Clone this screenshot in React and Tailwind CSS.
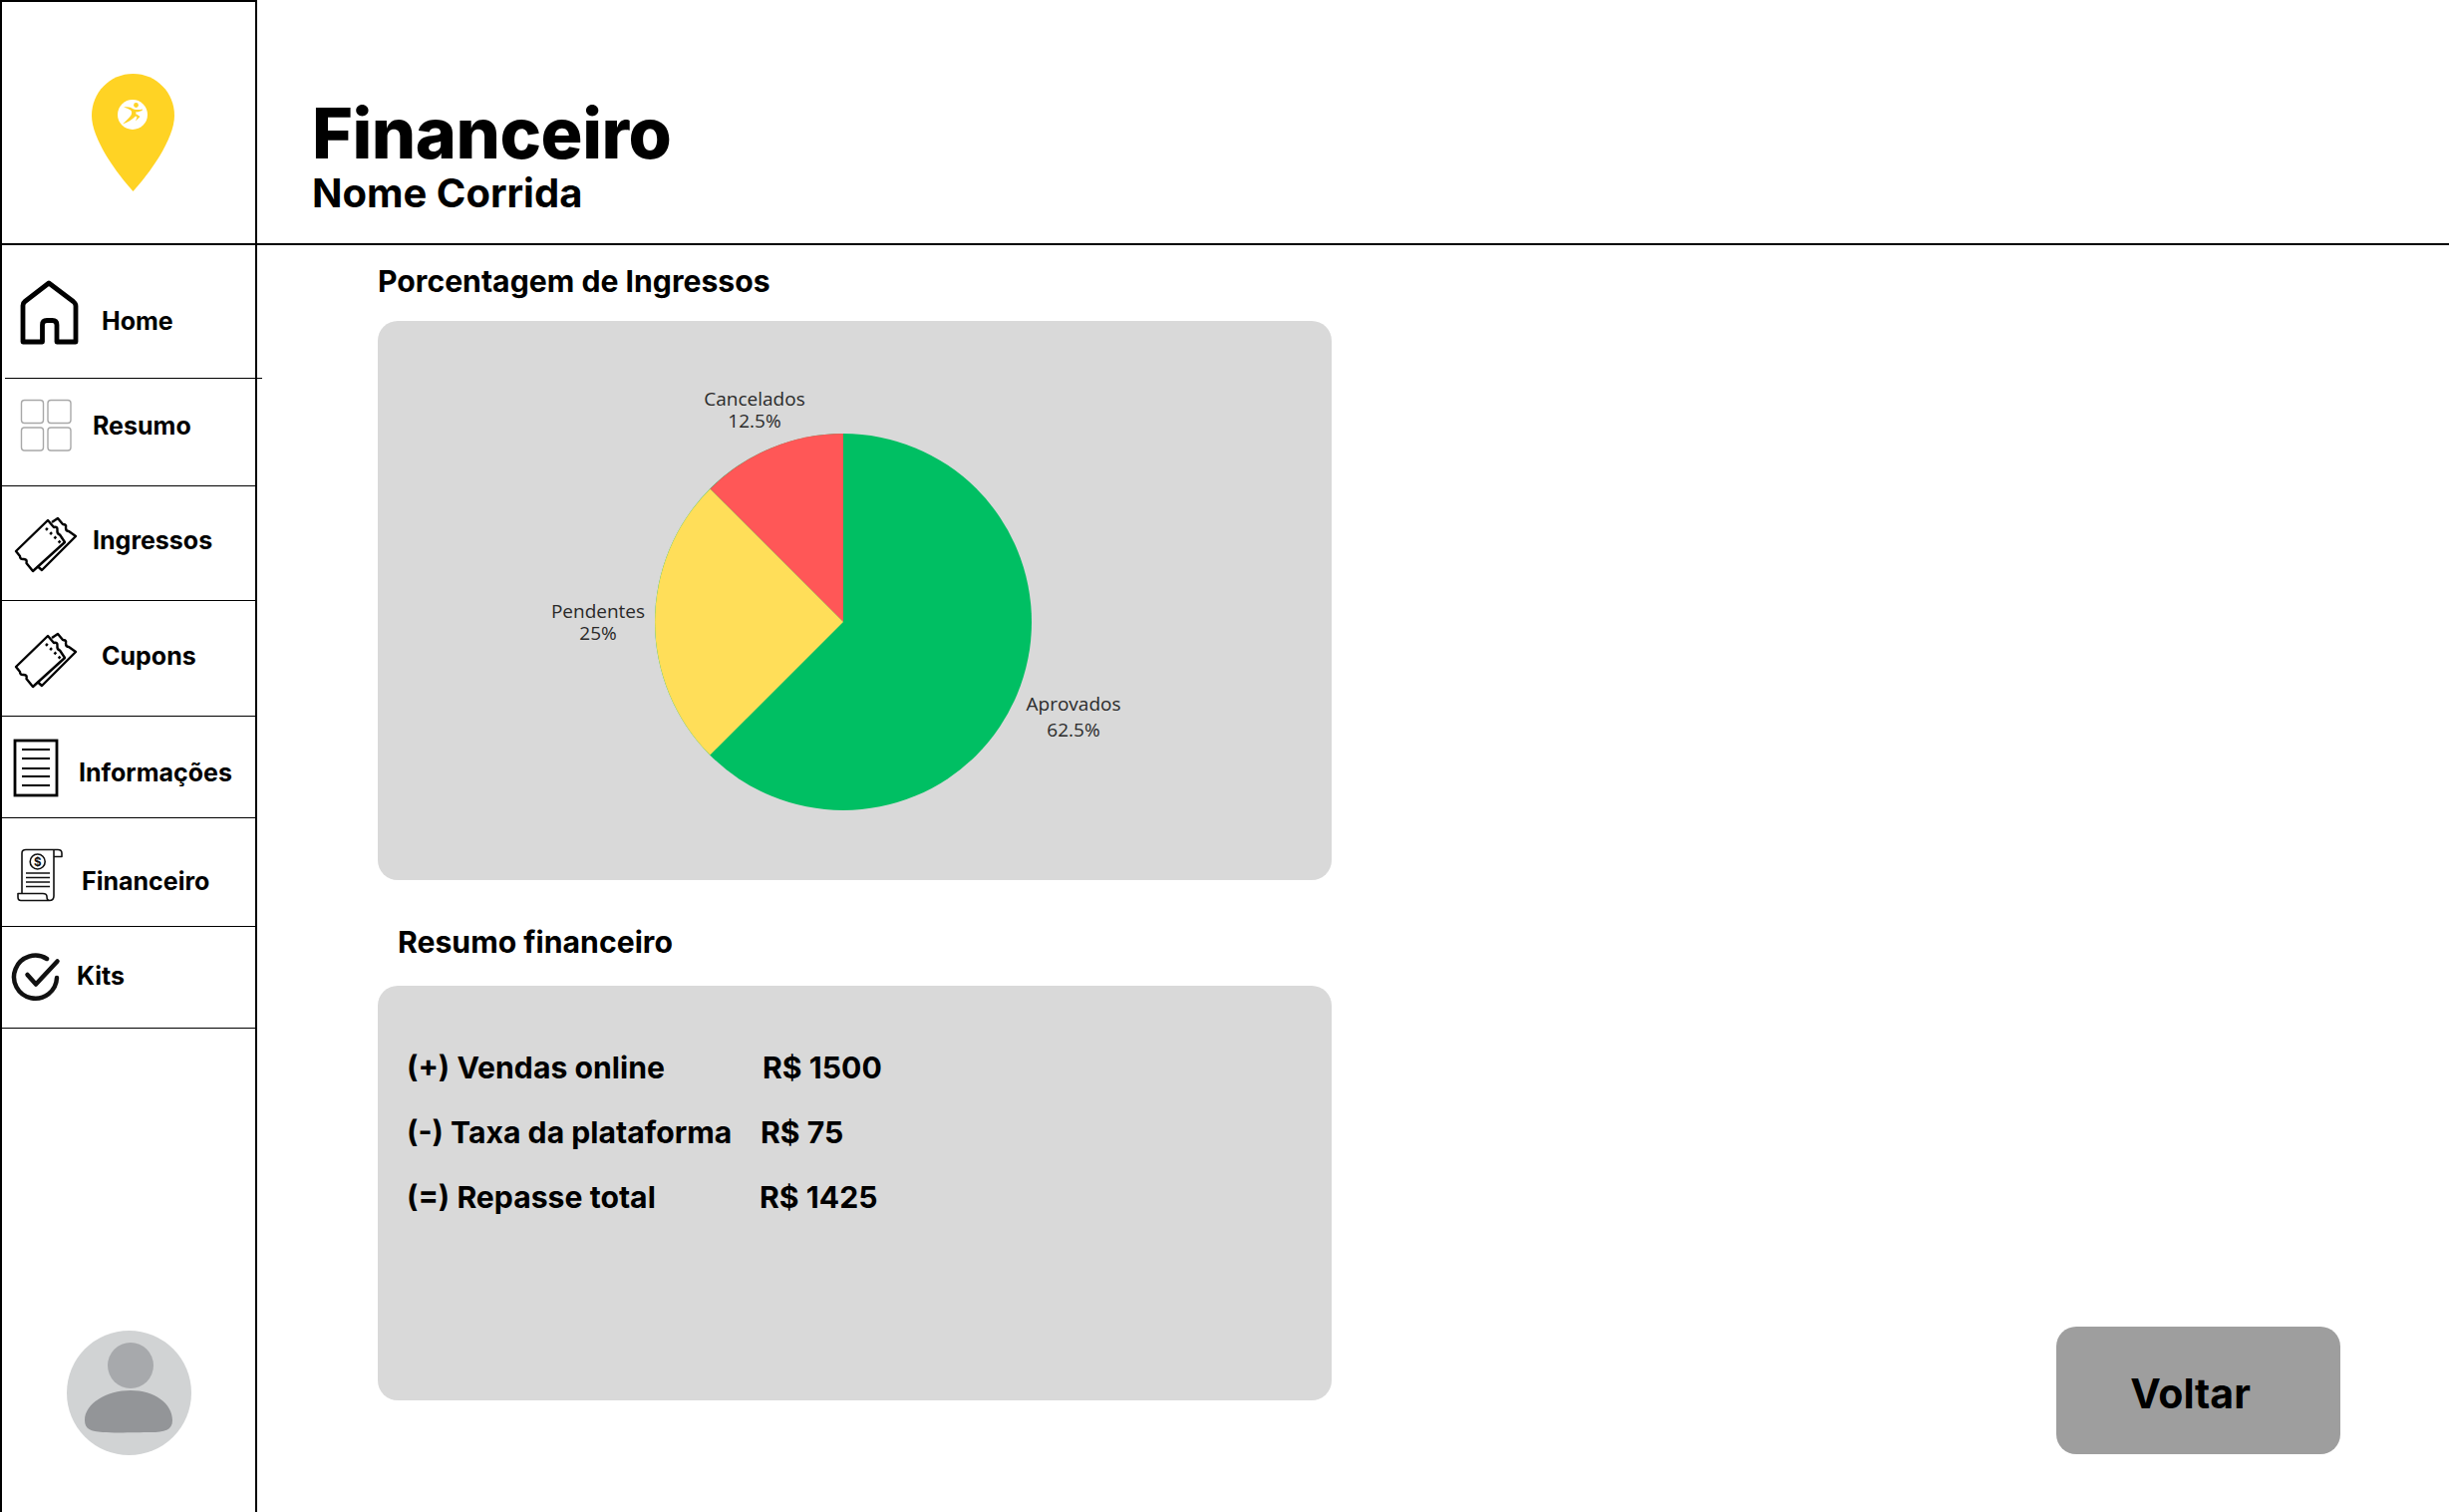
const HomeIcon = () => (
  <svg width="60" height="68" viewBox="0 0 60 68" fill="none" stroke="#000" strokeWidth="4.8" strokeLinejoin="round">
    <path d="M22.5 63H3V26.5Q3 24 5 22.5L29 4L53.5 22.5Q56 24.5 56 27V63H37V46Q37 41.5 32.5 41.5H27Q22.5 41.5 22.5 46Z" />
  </svg>
);

const GridIcon = () => (
  <svg width="52" height="54" viewBox="0 0 52 54" fill="none" stroke="#a8a8a8" strokeWidth="1.4">
    <rect x="1.5" y="1.5" width="22" height="23" rx="3" />
    <rect x="28" y="1.5" width="23" height="23" rx="3" />
    <rect x="1.5" y="29" width="22" height="23" rx="3" />
    <rect x="28" y="29" width="23" height="23" rx="3" />
  </svg>
);

const TicketIcon = () => (
  <svg width="64" height="57" viewBox="0 0 64 57" fill="none" stroke="#000" strokeWidth="2.4" strokeLinejoin="round">
    <path d="M34 4L40 11Q44 10 43.5 14Q43 18 46 18.5L51 26L19 55L12.5 47Q13.5 43 10 43Q6 43.5 6 40L2 35Z" />
    <path d="M38 6L44 2L49 8Q53 8 52 11.5Q52 15 55 15L62 20L28 54L23.5 50" />
    <path d="M32 12L47 27" strokeWidth="2.6" strokeDasharray="2.5 3.5" />
  </svg>
);

const DocIcon = () => (
  <svg width="48" height="60" viewBox="0 0 48 60" fill="none" stroke="#000" strokeWidth="2.2">
    <rect x="3" y="3" width="42" height="55" strokeWidth="2.8" />
    <path d="M10 12H38M10 21H38M10 31H38M10 39H38M10 48H38" />
  </svg>
);

const ScrollIcon = () => (
  <svg width="46" height="54" viewBox="0 0 46 54" fill="none" stroke="#111" strokeWidth="1.6" strokeLinejoin="round">
    <path d="M5 45V5Q5 1.5 9 1.5H41Q45 1.5 45 5V8.5H37" />
    <path d="M37 1.5Q37 4 37 8.5V48Q37 52.5 32.5 52.5H4Q1 52.5 1 49V45.5H26Q30 45.5 30 48.5Q30 52.5 33 52.5" />
    <circle cx="20.7" cy="13.5" r="7.5" />
    <text x="20.7" y="17.6" textAnchor="middle" fontFamily="Inter, sans-serif" fontWeight="700" fontSize="11.5" fill="#111" stroke="none">$</text>
    <path d="M9 25H33M9 29.5H33M9 34H33M9 38.5H33" />
  </svg>
);

const CheckIcon = () => (
  <svg width="52" height="52" viewBox="0 0 52 52" fill="none" stroke="#111" strokeWidth="4.5" strokeLinecap="round" strokeLinejoin="round">
    <path d="M37 9A21.5 21.5 0 1 0 47 28" />
    <path d="M17.5 25L26 34.5L47.5 11.5" />
  </svg>
);

const navItems = [
  { label: "Home", icon: <HomeIcon />, row: "h-[134px] -mr-[7px] ml-[3px]", iconBox: "mt-[34px] ml-[15px]", text: "mt-[61px] ml-[22px]" },
  { label: "Resumo", icon: <GridIcon />, row: "h-[108px]", iconBox: "mt-[20px] ml-[18px]", text: "mt-[32px] ml-[21px]" },
  { label: "Ingressos", icon: <TicketIcon />, row: "h-[115px]", iconBox: "mt-[30px] ml-[12px]", text: "mt-[39px] ml-[15px]" },
  { label: "Cupons", icon: <TicketIcon />, row: "h-[116px]", iconBox: "mt-[31px] ml-[12px]", text: "mt-[40px] ml-[24px]" },
  { label: "Informações", icon: <DocIcon />, row: "h-[102px]", iconBox: "mt-[21px] ml-[10px]", text: "mt-[41px] ml-[19px]" },
  { label: "Financeiro", icon: <ScrollIcon />, row: "h-[109px]", iconBox: "mt-[30px] ml-[15px]", text: "mt-[48px] ml-[19px]" },
  { label: "Kits", icon: <CheckIcon />, row: "h-[102px]", iconBox: "mt-[23px] ml-[8px]", text: "mt-[34px] ml-[15px]" },
];

const summary = [
  { label: "(+) Vendas online", value: "R$ 1500", valueClass: "ml-[2px]" },
  { label: "(-) Taxa da plataforma", value: "R$ 75", valueClass: "" },
  { label: "(=) Repasse total", value: "R$ 1425", valueClass: "-ml-[1px]" },
];

const Logo = () => (
  <svg width="83" height="118" viewBox="0 0 83 118">
    <path d="M41.5 0C18 0 0 19 0 42C0 66 26 101 41.5 118C57 101 83 66 83 42C83 19 65 0 41.5 0Z" fill="#ffd324" />
    <circle cx="41" cy="41" r="15" fill="#fff" />
    <circle cx="44.5" cy="31.5" r="2.4" fill="#ffd324" />
    <path d="M32 33.5Q38 32.5 42 35.5Q46 36.5 51 35.5L50.5 37Q46 38.5 44 38.5Q45.5 41 43.5 43Q39 47.5 31 50.5Q37 45 39.5 41.5Q41 38 39 36.5Q36 34.5 32 33.5Z" fill="#ffd324" />
    <path d="M45 40.5L48.5 43L44 47.5L45.5 43.5L43.5 42Z" fill="#ffd324" />
  </svg>
);

const Avatar = () => (
  <svg width="125" height="125" viewBox="0 0 125 125">
    <circle cx="62.5" cy="62.5" r="62.5" fill="#d1d3d4" />
    <circle cx="64" cy="35" r="23" fill="#a7a9ac" />
    <path d="M18 90C18 73 40 60 64 60C88 60 106 73 106 90C106 100 98 102 84 102C72 102 50 103 36 102C24 101 18 99 18 90Z" fill="#939598" />
  </svg>
);

const PieChart = () => (
  <svg className="w-full" width="957" height="560" viewBox="0 0 957 560" fontFamily="'Open Sans', sans-serif" fontSize="19" fill="#2a2a2a">
    <circle cx="467" cy="302" r="189" fill="#00bf63" />
    <path d="M467 302V113A189 189 0 0 0 333.4 168.4Z" fill="#ff5757" />
    <path d="M467 302L333.4 168.4A189 189 0 0 0 333.4 435.6Z" fill="#ffde59" />
    <text textAnchor="middle">
      <tspan x="378" y="85">Cancelados</tspan>
      <tspan x="378" y="107">12.5%</tspan>
    </text>
    <text textAnchor="middle">
      <tspan x="221" y="298">Pendentes</tspan>
      <tspan x="221" y="320">25%</tspan>
    </text>
    <text textAnchor="middle">
      <tspan x="698" y="391">Aprovados</tspan>
      <tspan x="698" y="417">62.5%</tspan>
    </text>
  </svg>
);

export default function App() {
  return (
    <div className="flex h-[1517px] w-[2457px] overflow-hidden bg-white text-black font-['Inter',sans-serif]">
      <aside className="flex w-[258px] shrink-0 flex-col border-x-2 border-black">
        <div className="flex h-[246px] shrink-0 items-start border-y-2 border-black pl-[90px] pt-[72px]">
          <Logo />
        </div>
        {navItems.map((item) => (
          <div key={item.label} className={`flex shrink-0 border-b border-black ${item.row}`}>
            <div className={`shrink-0 ${item.iconBox}`}>{item.icon}</div>
            <span className={`text-[25px] leading-[30px] font-bold whitespace-nowrap ${item.text}`}>{item.label}</span>
          </div>
        ))}
        <div className="mt-[303px] ml-[65px]">
          <Avatar />
        </div>
      </aside>

      <main className="flex min-w-0 flex-1 flex-col">
        <header className="h-[246px] shrink-0 border-b-2 border-black pl-[55px] pt-[99px]">
          <h1 className="text-[70px] leading-[70px] font-extrabold tracking-[-0.5px]">Financeiro</h1>
          <p className="mt-[3px] text-[40px] leading-[44px] font-bold">Nome Corrida</p>
        </header>

        <div className="flex flex-1 items-end justify-between pb-[58px] pl-[121px] pr-[109px]">
          <div className="flex w-[957px] flex-col self-start">
            <h2 className="mt-[18px] text-[30.2px] leading-[36px] font-bold">Porcentagem de Ingressos</h2>
            <section className="mt-[22px] h-[561px] rounded-[20px] bg-[#d9d9d9]">
              <PieChart />
            </section>
            <h2 className="mt-[44px] ml-[20px] text-[30.2px] leading-[36px] font-bold">Resumo financeiro</h2>
            <section className="mt-[26px] flex h-[416px] flex-col gap-[29px] rounded-[20px] bg-[#d9d9d9] pl-[29px] pt-[64px]">
              {summary.map((row) => (
                <div key={row.label} className="flex text-[30.2px] leading-[36px] font-bold">
                  <span className="w-[355px] whitespace-nowrap">{row.label}</span>
                  <span className={row.valueClass}>{row.value}</span>
                </div>
              ))}
            </section>
          </div>
          <button className="h-[128px] w-[285px] rounded-[20px] bg-[#9e9e9e] pt-[8px] pr-[16px] text-[41px] font-bold">
            Voltar
          </button>
        </div>
      </main>
    </div>
  );
}
